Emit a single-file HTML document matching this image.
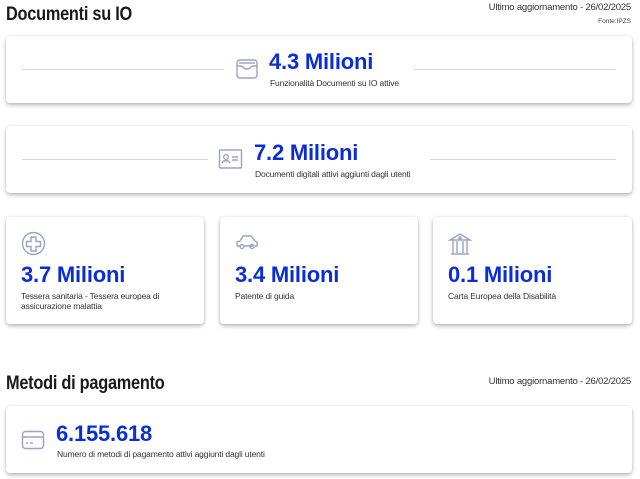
<!DOCTYPE html>
<html><head><meta charset="utf-8"><style>
*{box-sizing:border-box;margin:0;padding:0}
body{width:640px;height:479px;background:#fff;font-family:"Liberation Sans",sans-serif;color:#17202a;position:relative;overflow:hidden}
.abs{position:absolute}
h2{position:absolute;font-size:19px;font-weight:bold;letter-spacing:-0.3px;color:#1a1a1a;transform:scaleX(0.86);transform-origin:left top}
.upd{position:absolute;font-size:9.5px;color:#333;right:9px;letter-spacing:-0.2px}
.card{position:absolute;background:#fff;border-radius:4px;box-shadow:0 2px 4px rgba(0,0,0,.28),0 0 2px rgba(0,0,0,.08)}
.big{font-size:22px;font-weight:bold;color:#0a2ed4;letter-spacing:-0.2px;white-space:nowrap}
.sub{font-size:8.5px;color:#333;letter-spacing:-0.15px;line-height:10px}
.line{position:absolute;height:1px;background:#d5d9df}
svg{position:absolute;fill:none;stroke:#9aa3c2;stroke-width:1.4}
</style></head><body>
<h2 style="left:6px;top:4px">Documenti su IO</h2>
<div class="upd" style="top:2px">Ultimo aggiornamento - 26/02/2025</div>
<div class="abs" style="right:9px;top:18px;font-size:6.5px;color:#444">Fonte:IPZS</div>

<div class="card" style="left:6px;top:36px;width:626px;height:67px">
 <div class="line" style="left:16px;top:33px;width:202px"></div>
 <div class="line" style="left:408px;top:33px;width:202px"></div>
 <svg style="left:229px;top:22px" width="24" height="22" viewBox="0 0 24 22"><rect x="2" y="2" width="20" height="18" rx="3"/><path d="M2 8h4c2 0 2 3 6 3s4-3 6-3h4"/><path d="M4 5h16"/></svg>
 <div class="big abs" style="left:263px;top:13px">4.3 Milioni</div>
 <div class="sub abs" style="left:264px;top:42px">Funzionalità Documenti su IO attive</div>
</div>

<div class="card" style="left:6px;top:126px;width:626px;height:67px">
 <div class="line" style="left:16px;top:33px;width:186px"></div>
 <div class="line" style="left:424px;top:33px;width:186px"></div>
 <svg style="left:212px;top:22px" width="26" height="22" viewBox="0 0 26 22"><rect x="1.5" y="2" width="22" height="18" rx="1"/><circle cx="8" cy="9" r="2.3"/><path d="M4 15c1-3 7-3 8 0M14 9h6M14 12h6"/></svg>
 <div class="big abs" style="left:248px;top:14px">7.2 Milioni</div>
 <div class="sub abs" style="left:249px;top:43px">Documenti digitali attivi aggiunti dagli utenti</div>
</div>

<div class="card" style="left:6px;top:217px;width:198px;height:107px">
 <svg style="left:15px;top:14px" width="25" height="25" viewBox="0 0 25 25"><circle cx="12.5" cy="12.5" r="11"/><path d="M10 6h5v4.5h4.5v5H15V20h-5v-4.5H5.5v-5H10z"/></svg>
 <div class="big abs" style="left:15px;top:45px">3.7 Milioni</div>
 <div class="sub abs" style="left:15px;top:74px">Tessera sanitaria - Tessera europea di<br>assicurazione malattia</div>
</div>
<div class="card" style="left:220px;top:217px;width:198px;height:107px">
 <svg style="left:15px;top:17px" width="24" height="18" viewBox="0 0 24 18"><path d="M2 12V8l3-1 3-5h8l4 5 2 1v4h-2M6 12H2M18 12H9"/><circle cx="7" cy="12.5" r="2"/><circle cx="17" cy="12.5" r="2"/></svg>
 <div class="big abs" style="left:15px;top:45px">3.4 Milioni</div>
 <div class="sub abs" style="left:15px;top:74px">Patente di guida</div>
</div>
<div class="card" style="left:433px;top:217px;width:199px;height:107px">
 <svg style="left:15px;top:15px" width="24" height="24" viewBox="0 0 24 24"><path d="M2 8L12 2l10 6zM2 8h20M3 22h18M5 9v12M9 9v12M15 9v12M19 9v12"/><circle cx="12" cy="6" r="1"/></svg>
 <div class="big abs" style="left:15px;top:45px">0.1 Milioni</div>
 <div class="sub abs" style="left:15px;top:74px">Carta Europea della Disabilità</div>
</div>

<h2 style="left:6px;top:373px">Metodi di pagamento</h2>
<div class="upd" style="top:376px">Ultimo aggiornamento - 26/02/2025</div>

<div class="card" style="left:6px;top:406px;width:626px;height:67px">
 <svg style="left:15px;top:24px" width="24" height="20" viewBox="0 0 24 20"><rect x="1.5" y="1.5" width="21" height="17" rx="3"/><path d="M1.5 7h21M5 13h2M9 13h3"/></svg>
 <div class="big abs" style="left:50px;top:15px">6.155.618</div>
 <div class="sub abs" style="left:51px;top:43px">Numero di metodi di pagamento attivi aggiunti dagli utenti</div>
</div>
</body></html>
